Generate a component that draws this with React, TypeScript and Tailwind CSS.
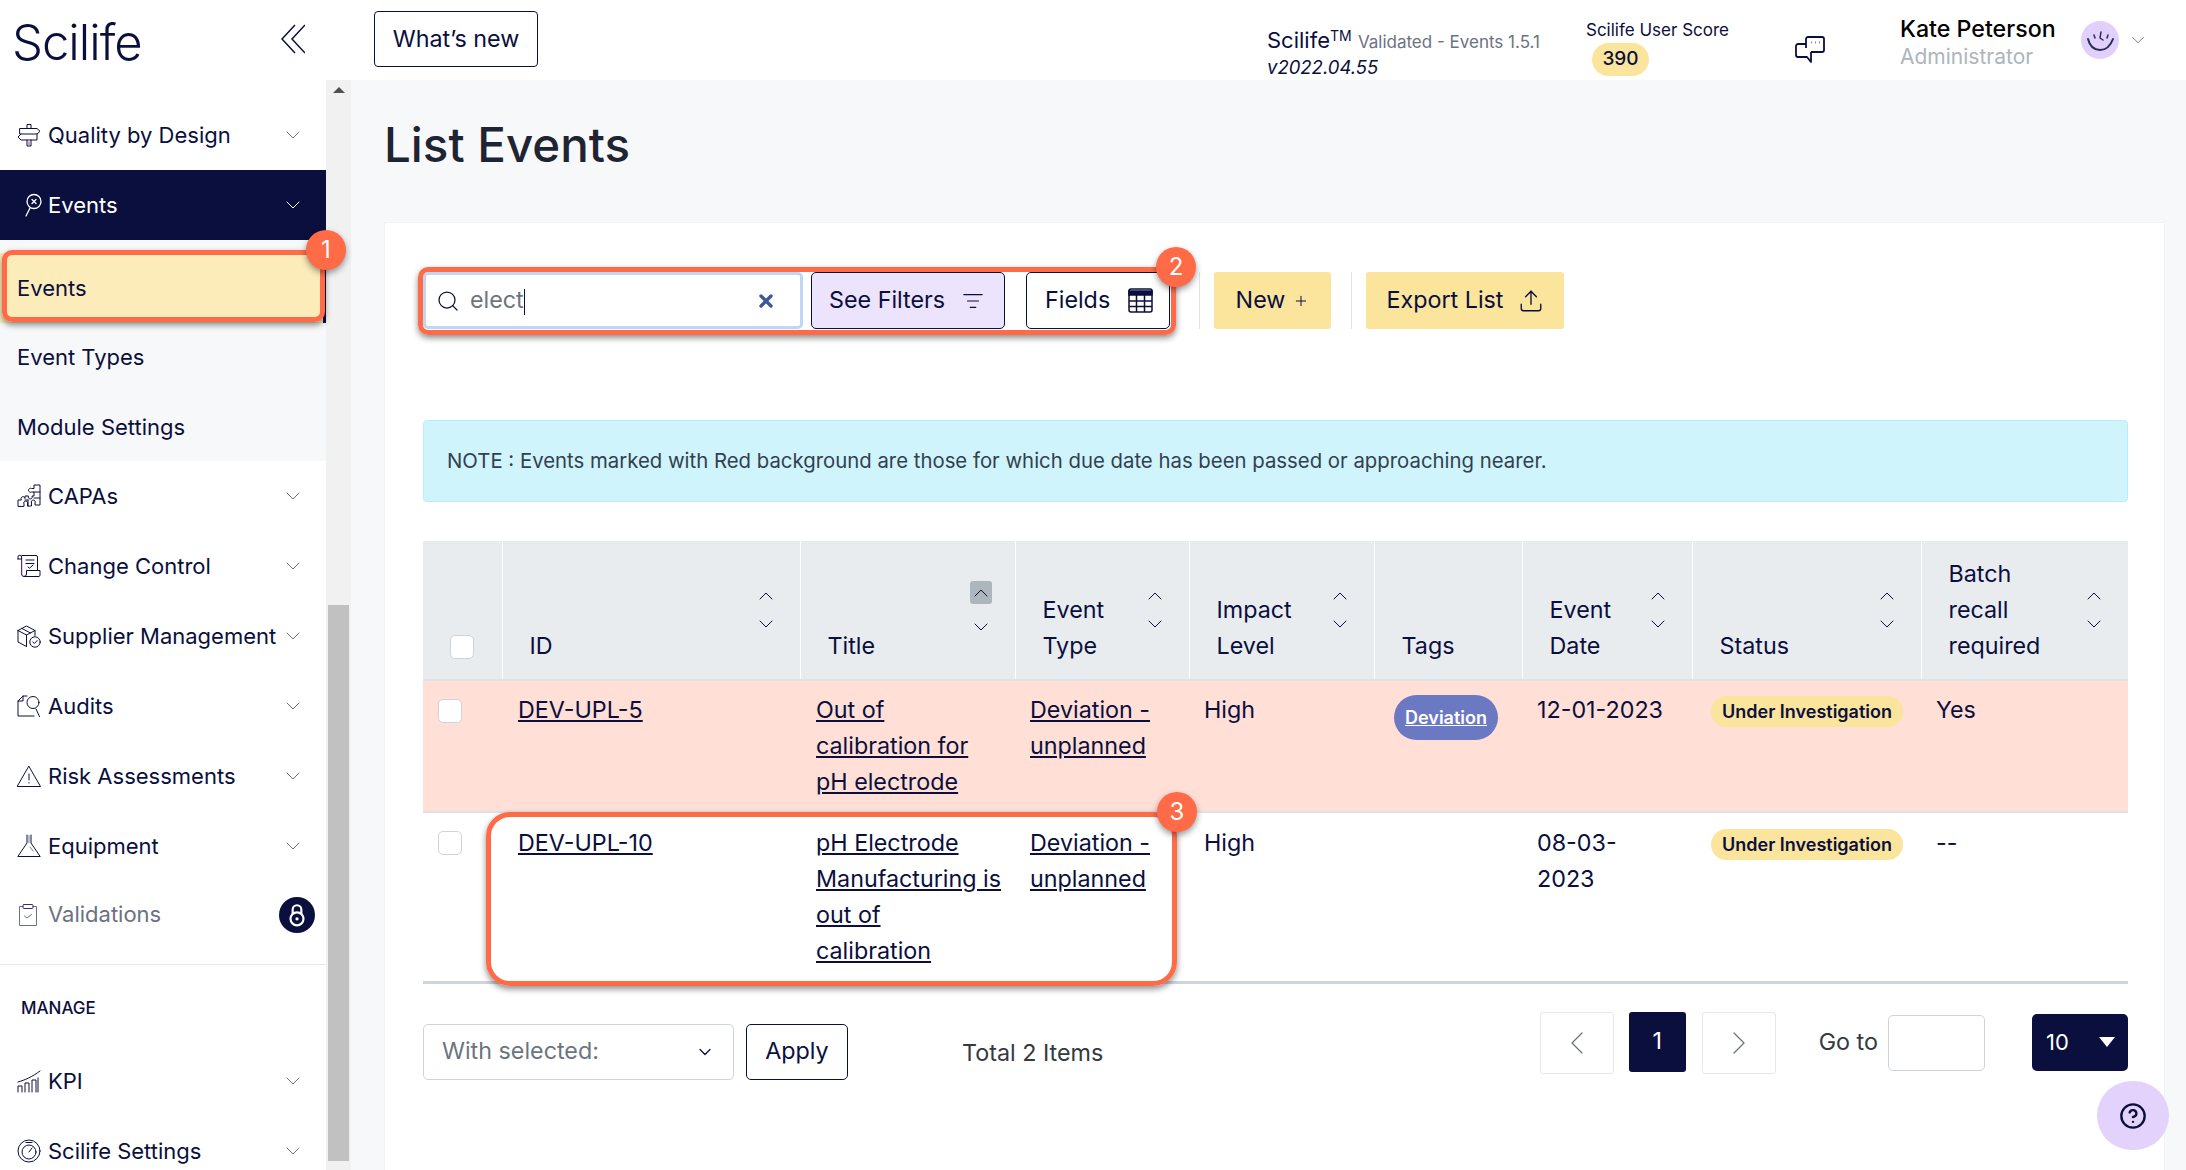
import type { ReactNode } from 'react';
import { Search, X, ListFilter, ChevronUp, ChevronDown, ChevronLeft, ChevronRight, Plus, Upload, CircleHelp } from 'lucide-react';

const Svg = ({ children, className = 'w-[24px] h-[24px] mr-[7px] shrink-0' }: { children: ReactNode; className?: string }) => (
  <svg viewBox="0 0 24 24" fill="none" stroke="currentColor" strokeWidth={1} strokeLinejoin="round" strokeLinecap="round" className={className}>
    {children}
  </svg>
);

const SignIcon = () => (
  <Svg>
    <path d="M10 5V1.5h4V5M10 17v6h4v-6" />
    <path d="M3 5.5h17l3 2.8-3 2.7H3z" />
    <path d="M4 11l-3 3 3 3h16v-6" />
    <path d="M12 19v3" stroke="#b4475c" />
  </Svg>
);
const PuzzleIcon = () => (
  <Svg>
    <path d="M1 22v-6h3.5a2 2 0 1 1 3.5-1.5V12h3.5a2 2 0 1 0 3.5 0h2V8h-2.5a2 2 0 1 1 0-3.5H17V1h6v20h-5v-2a2 2 0 1 0-3.5 0V22h-4v-2a2 2 0 1 0-3.5 0V22z" />
    <path d="M8 16h3M17 8h6M17 14h6M11 16v6" />
  </Svg>
);
const ScrollIcon = () => (
  <Svg>
    <path d="M5 1.5h14a1.5 1.5 0 0 1 1.500 1.500V16" />
    <path d="M1 5V3a1.800 1.800 0 0 1 3.600 0v17a2.500 2.500 0 0 0 2.500 2.500H22a1.500 1.500 0 0 0 1-1.500v-4.500H9.500V20a2.500 2.500 0 0 1-2.500 2.500" />
    <path d="M1 5h3.600" />
    <path d="M4.600 6v14" stroke="#6b2a9a" />
    <path d="M9 6h8M9 9.500h8M11 13l1.500 1.200L16 11" />
  </Svg>
);
const BoxIcon = () => (
  <Svg>
    <path d="M1 6.500L9.500 2 18 6.500v5M1 6.500V18l8.500 4.500M1 6.500l8.500 4.500V22.500M9.500 11L18 6.500M5 4.500l8.500 4.500" />
    <circle cx="18" cy="18" r="5.200" />
    <path d="M15.800 18l1.600 1.500 2.800-3" />
  </Svg>
);
const AuditIcon = () => (
  <Svg>
    <path d="M10 2H6L1 7v15h16" />
    <path d="M6 2v5H1" />
    <circle cx="16" cy="8.500" r="6" />
    <path d="M19 15l3.500 7.500" />
  </Svg>
);
const RiskIcon = () => (
  <Svg>
    <path d="M12 2.500L23.500 22.500H.5z" />
    <path d="M12 10v6M12 18.500v.5" />
  </Svg>
);
const FlaskIcon = () => (
  <Svg>
    <path d="M10 1v8L.8 22.500h22.400L14 9V1" />
    <path d="M12 1.500v7M13 13l3 4" stroke="#7b8088" />
  </Svg>
);
const ClipIcon = () => (
  <svg viewBox="0 0 20 24" fill="none" stroke="currentColor" strokeWidth={1} strokeLinecap="round" className="w-[20px] h-[24px] mr-[10px] shrink-0">
    <path d="M5 3.500H1.500v19h17v-19H15" />
    <rect x="5" y="1.500" width="10" height="4" rx="1" stroke="#3b2a7a" />
    <path d="M6.500 13l2.500 2 4.500-3.500" />
  </svg>
);
const KpiIcon = () => (
  <Svg>
    <path d="M1 23v-6h4v6M8 23v-9h4v9M15 23V11h4v12M21 23V9" />
    <path d="M1 13C8 11 15 8 23 2" />
  </Svg>
);
const DialIcon = () => (
  <Svg>
    <circle cx="12" cy="12" r="11" />
    <circle cx="12" cy="13" r="7" />
    <path d="M12 13l3-4M9 3.500h6" />
  </Svg>
);

const menuTop = [
  { label: 'CAPAs', icon: <PuzzleIcon /> },
  { label: 'Change Control', icon: <ScrollIcon /> },
  { label: 'Supplier Management', icon: <BoxIcon /> },
  { label: 'Audits', icon: <AuditIcon /> },
  { label: 'Risk Assessments', icon: <RiskIcon /> },
  { label: 'Equipment', icon: <FlaskIcon /> },
];

const Chevron = () => <ChevronDown className="w-[24px] h-[24px] text-[#6b7280] shrink-0" strokeWidth={1} />;

const Item = ({ label, icon }: { label: string; icon: ReactNode }) => (
  <div className="h-[70px] flex items-center pl-[17px] pr-[21px]">
    {icon}
    <span className="flex-1 whitespace-nowrap text-[22px]">{label}</span>
    <Chevron />
  </div>
);

const Sidebar = () => (
  <aside className="w-[351px] shrink-0 flex flex-col bg-white h-[1170px] overflow-hidden">
    <div className="h-[80px] shrink-0 flex items-center justify-between pl-[12px] pr-[46px]">
      <span className="text-[49px] font-light leading-none text-[#0a0f3d] tracking-[-1px] mt-[4px]">Scilife</span>
      <svg viewBox="0 0 24 30" fill="none" stroke="currentColor" strokeWidth={1.5} className="w-[24px] h-[30px] -mt-[3px] text-[#0a0f3d]">
        <path d="M14 1L1 15l13 14M24 1L11 15l13 14" />
      </svg>
    </div>
    <div className="flex flex-1">
      <nav className="w-[326px] pt-[20px]">
        <Item label="Quality by Design" icon={<SignIcon />} />
        <div className="h-[70px] bg-[#0a0f3d] text-white flex items-center pl-[21px] pr-[21px]">
          <svg viewBox="0 0 24 24" fill="none" stroke="currentColor" strokeWidth={1.3} strokeLinecap="round" className="w-[24px] h-[24px] mr-[3px] shrink-0">
            <circle cx="13" cy="8.500" r="7" />
            <path d="M9 15L5 23M11 6.500l4 4M15 6.500l-4 4" />
          </svg>
          <span className="flex-1 text-[22px]">Events</span>
          <ChevronDown className="w-[24px] h-[24px]" strokeWidth={1} />
        </div>
        <div className="bg-[#f6f8fa] h-[221px] pt-[13px]">
          <div className="h-[70px] flex items-center pl-[17px] bg-[#fbecba] border-r-[3px] border-[#0a0f3d] text-[22px]">Events</div>
          <div className="h-[69px] flex items-center pl-[17px] text-[22px]">Event Types</div>
          <div className="h-[70px] flex items-center pl-[17px] text-[22px]">Module Settings</div>
        </div>
        {menuTop.map((m) => <Item key={m.label} {...m} />)}
        <div className="h-[70px] flex items-center pl-[18px] pr-[11px] pb-[3px] text-[#6b7280]">
          <ClipIcon />
          <span className="flex-1 text-[22px]">Validations</span>
          <span className="w-[36px] h-[36px] rounded-full bg-[#0a0f3d] flex items-center justify-center">
            <svg viewBox="0 0 24 24" fill="none" stroke="white" strokeWidth={2} className="w-[26px] h-[26px]">
              <path d="M8 11V7a4 4 0 0 1 8 0v4" />
              <circle cx="12" cy="15.500" r="6" />
              <circle cx="12" cy="15.500" r="1.500" fill="white" stroke="none" />
            </svg>
          </span>
        </div>
        <div className="mt-[13px] border-t border-[#e5e7eb] pt-[33px] pl-[21px] text-[17px] font-medium leading-[20px] h-[82px]">MANAGE</div>
        <Item label="KPI" icon={<KpiIcon />} />
        <Item label="Scilife Settings" icon={<DialIcon />} />
      </nav>
      <div className="w-[25px] bg-[#f1f1f1] flex flex-col items-center pt-[7px]">
        <div className="w-0 h-0 border-x-[6px] border-x-transparent border-b-[6px] border-b-[#505050]" />
        <div className="w-[21px] h-[556px] mt-[512px] bg-[#c1c1c1]" />
      </div>
    </div>
  </aside>
);

const TopBar = () => (
  <header className="h-[80px] shrink-0 bg-white flex items-center relative pl-[23px]">
    <button className="h-[56px] w-[164px] -mt-[2px] border border-[#0a0f3d] rounded-[4px] text-[23.300px]">What’s new</button>
    <div className="ml-[729px] w-[319px] mt-[26px]">
      <div className="leading-[26px] text-[22px] whitespace-nowrap">Scilife<sup className="text-[14px]">TM</sup> <span className="text-[17px] text-[#6b7280]">Validated - Events 1.5.1</span></div>
      <div className="italic text-[18.500px] leading-[24px]">v2022.04.55</div>
    </div>
    <div className="w-[209px] self-start pt-[19px]">
      <div className="text-[17px] leading-[22px] whitespace-nowrap">Scilife User Score</div>
      <div className="ml-[6px] mt-[2px] w-[57px] h-[33px] rounded-full bg-[#fbe49c] flex items-center justify-center text-[19px] font-medium">390</div>
    </div>
    <svg viewBox="0 0 30 28" fill="none" stroke="currentColor" strokeWidth={1.800} strokeLinejoin="round" className="w-[30px] h-[28px] mt-[20px] mr-[75px] text-[#0a0f3d]">
      <path d="M11 12V3a2 2 0 0 1 2-2h14a2 2 0 0 1 2 2v11a2 2 0 0 1-2 2H16" />
      <path d="M11 8H3a2 2 0 0 0-2 2v9a2 2 0 0 0 2 2h9l4 5V16" />
      <path d="M16 6.500h.5M20 6.500h.5M24 6.500h.5" strokeWidth={2.200} />
    </svg>
    <div className="w-[181px] mt-[5px]">
      <div className="text-[23.200px] font-medium leading-[27px] whitespace-nowrap text-black">Kate Peterson</div>
      <div className="text-[21px] leading-[27px] text-[#adb5bd]">Administrator</div>
    </div>
    <span className="w-[38px] h-[38px] rounded-full bg-[#e0d0fb] flex items-center justify-center">
      <svg viewBox="0 0 38 38" fill="none" stroke="#2a2c55" strokeWidth={2} strokeLinecap="round" className="w-[38px] h-[38px]">
        <path d="M7 18c2 8 7 11 12 11s10-3 13-11" />
        <path d="M13 14l1 3M20 11l-1 6 3 2M27 14l-1 3" strokeWidth={1.500} />
      </svg>
    </span>
    <ChevronDown className="w-[22px] h-[22px] ml-[8px] text-[#6b7280]" strokeWidth={1} />
  </header>
);

const Sort = ({ active }: { active?: boolean }) => (
  <div className="flex flex-col items-center shrink-0 w-[24px]">
    {active ? (
      <span className="w-[22px] h-[23px] rounded-[3px] bg-[#adb5bd] flex items-center justify-center"><ChevronUp className="w-[24px] h-[24px] shrink-0" strokeWidth={1} /></span>
    ) : <ChevronUp className="w-[24px] h-[24px]" strokeWidth={1} />}
    <ChevronDown className={active ? 'w-[24px] h-[24px] mt-[11px]' : 'w-[24px] h-[24px] mt-[4px]'} strokeWidth={1} />
  </div>
);

const Head = ({ label, sort, active }: { label?: string[]; sort?: boolean; active?: boolean }) => (
  <th className="border-r border-white last:border-r-0 font-normal text-left p-0 pl-[27px]">
    <div className="flex items-center justify-between h-[138px] pr-[22px]">
      <div className="self-end pb-[15px] leading-[36px]">
        {label?.map((l) => <div key={l}>{l}</div>)}
      </div>
      {sort && <Sort active={active} />}
    </div>
  </th>
);

const Check = ({ className = '' }: { className?: string }) => (
  <span className={`block w-[24px] h-[24px] rounded-[5px] border border-[#ced4da] bg-white ${className}`} />
);

const Under = () => (
  <span className="inline-block h-[31px] w-[192px] mt-[2px] -ml-[1px] rounded-full bg-[#fbe49c] text-center text-[18px] font-semibold leading-[31px] whitespace-nowrap">Under Investigation</span>
);

const EventsTable = () => (
  <table className="w-[1705px] table-fixed border-collapse text-[23.300px] leading-[36px] mt-[39px]">
    <colgroup>
      <col className="w-[79px]" /><col className="w-[298px]" /><col className="w-[215px]" /><col className="w-[174px]" /><col className="w-[185px]" /><col className="w-[148px]" /><col className="w-[170px]" /><col className="w-[229px]" /><col className="w-[207px]" />
    </colgroup>
    <thead className="bg-[#e9ecef] border-b-2 border-[#dee2e6]">
      <tr>
        <th className="border-r border-white p-0 align-bottom"><Check className="ml-[27px] mb-[20px]" /></th>
        <Head label={['ID']} sort />
        <Head label={['Title']} sort active />
        <Head label={['Event', 'Type']} sort />
        <Head label={['Impact', 'Level']} sort />
        <Head label={['Tags']} />
        <Head label={['Event', 'Date']} sort />
        <Head label={['Status']} sort />
        <Head label={['Batch', 'recall', 'required']} sort />
      </tr>
    </thead>
    <tbody className="[&_td]:align-top [&_td]:pt-[11px] [&_td]:pl-[15px] [&_td]:pr-[4px] [&>tr:last-child_td]:pt-[12px]">
      <tr className="bg-[#ffdfd6] border-b-2 border-[#dee2e6] h-[132px]">
        <td><Check className="mt-[7px]" /></td>
        <td className="!pl-[16px]"><a className="underline">DEV-UPL-5</a></td>
        <td className="!pl-[16px]"><a className="underline">Out of<br />calibration for<br />pH electrode</a></td>
        <td><a className="underline">Deviation -<br />unplanned</a></td>
        <td>High</td>
        <td className="!pl-[20px]">
          <span className="inline-flex items-center justify-center w-[104px] h-[45px] mt-[3px] rounded-full bg-[#6b78c2] text-white text-[18px] font-semibold underline">Deviation</span>
        </td>
        <td>12-01-2023</td>
        <td className="!pl-[20px]"><Under /></td>
        <td>Yes</td>
      </tr>
      <tr className="border-b-[3px] border-[#ced4da] h-[170px]">
        <td><Check className="mt-[6px]" /></td>
        <td className="!pl-[16px]"><a className="underline">DEV-UPL-10</a></td>
        <td className="!pl-[16px]"><a className="underline">pH Electrode<br />Manufacturing is<br />out of<br />calibration</a></td>
        <td><a className="underline">Deviation -<br />unplanned</a></td>
        <td>High</td>
        <td />
        <td>08-03-<br />2023</td>
        <td className="!pl-[20px]"><Under /></td>
        <td>--</td>
      </tr>
    </tbody>
  </table>
);

const Footer = () => (
  <div className="flex items-start mt-[28px] relative">
    <div className="w-[311px] h-[56px] mt-[12px] border border-[#ced4da] rounded-[5px] flex items-center justify-between pl-[18px] pr-[18px] text-[#6c757d]">
      With selected:
      <ChevronDown className="w-[20px] h-[20px] text-[#0a0f3d]" strokeWidth={1.5} />
    </div>
    <button className="w-[102px] h-[56px] mt-[12px] ml-[12px] border border-[#0a0f3d] rounded-[5px]">Apply</button>
    <span className="ml-[114px] mt-[23px] leading-[36px] whitespace-nowrap text-[#343a40]">Total 2 Items</span>
    <div className="ml-auto flex items-start">
      <span className="w-[74px] h-[62px] border border-[#e5e7eb] rounded-[3px] flex items-center justify-center"><ChevronLeft className="w-[40px] h-[40px] text-[#6b7280]" strokeWidth={0.75} /></span>
      <span className="w-[57px] h-[60px] ml-[15px] bg-[#0a0f3d] rounded-[3px] text-white flex items-center justify-center">1</span>
      <span className="w-[74px] h-[62px] ml-[16px] border border-[#e5e7eb] rounded-[3px] flex items-center justify-center"><ChevronRight className="w-[40px] h-[40px] text-[#6b7280]" strokeWidth={0.75} /></span>
      <span className="ml-[43px] mt-[13px] mr-[10px] whitespace-nowrap text-[#343a40]">Go to</span>
      <span className="w-[97px] h-[56px] mt-[3px] border border-[#ced4da] rounded-[5px]" />
      <div className="w-[96px] h-[57px] mt-[2px] ml-[47px] rounded-[5px] bg-[#0a0f3d] text-white flex items-center justify-between pl-[14px] pr-[13px] text-[22px]">
        10
        <span className="w-0 h-0 border-x-[8px] border-x-transparent border-t-[10px] border-t-white" />
      </div>
    </div>
  </div>
);

const Notes = ({ className, n, badge }: { className: string; n: number; badge: string }) => (
  <>
    <div className={`absolute border-[5px] border-[#ff6b47] rounded-[10px] shadow-[0_3px_6px_rgba(0,0,0,0.45)] pointer-events-none ${className}`} />
    <div className={`absolute w-[40px] h-[40px] rounded-full bg-[#ff6b47] text-white text-[24px] flex items-center justify-center shadow-[0_3px_6px_rgba(0,0,0,0.4)] ${badge}`}>{n}</div>
  </>
);

export default function App() {
  return (
    <div className="relative w-[2186px] h-[1170px] overflow-hidden flex bg-[#f7f8fa] text-[#0a0f3d]" style={{ fontFamily: '"Inter", "Liberation Sans", sans-serif' }}>
      <Sidebar />
      <div className="flex-1 flex flex-col min-w-0">
        <TopBar />
        <main className="pl-[33px] pr-[21px]">
          <h1 className="text-[47.500px] font-medium leading-[54px] mt-[38px] text-[#1f2433]">List Events</h1>
          <section className="mt-[50px] bg-white border border-[#f1f3f5] pl-[38px] pr-[36px] pt-[49px] h-[950px] text-[23.300px]">
            <div className="flex items-center h-[57px]">
              <div className="w-[380px] h-[57px] border-[3px] border-[#bfd6f5] rounded-[5px] flex items-center pl-[10px] pr-[24px]">
                <Search className="w-[24px] h-[24px] mr-[10px] text-[#0a0f3d]" strokeWidth={1.25} />
                <span className="flex-1 text-[#6c757d]">elect<span className="inline-block w-px h-[26px] bg-[#0a0f3d] align-middle" /></span>
                <X className="w-[20px] h-[20px] text-[#3a5a96]" strokeWidth={4} />
              </div>
              <button className="w-[194px] h-[57px] ml-[8px] bg-[#ece3fc] border border-[#0a0f3d] rounded-[5px] flex items-center justify-between pl-[17px] pr-[20px]">
                See Filters <ListFilter className="w-[22px] h-[22px]" strokeWidth={1.25} />
              </button>
              <button className="w-[144px] h-[57px] ml-[21px] border border-[#0a0f3d] rounded-[5px] flex items-center justify-between pl-[18px] pr-[16px]">
                Fields
                <svg viewBox="0 0 25 25" fill="none" stroke="currentColor" strokeWidth={1.500} className="w-[25px] h-[25px]">
                  <rect x="1" y="1" width="23" height="23" rx="2" />
                  <path d="M1 3h23v4H1z" fill="currentColor" />
                  <path d="M1 13h23M1 18.500h23M8.500 7v17M16.500 7v17" />
                </svg>
              </button>
              <span className="w-px h-[57px] bg-[#dee2e6] ml-[29px]" />
              <button className="w-[117px] h-[57px] ml-[14px] bg-[#fbe49c] rounded-[3px] flex items-center justify-center gap-[8px]">
                New <Plus className="w-[16px] h-[16px]" strokeWidth={1.5} />
              </button>
              <span className="w-px h-[57px] bg-[#dee2e6] ml-[20px]" />
              <button className="w-[198px] h-[57px] ml-[14px] bg-[#fbe49c] rounded-[3px] flex items-center justify-center gap-[14px]">
                Export List <Upload className="w-[26px] h-[26px]" strokeWidth={1.25} />
              </button>
            </div>
            <div className="mt-[91px] h-[82px] bg-[#cff4fc] border border-[#b6effb] rounded-[4px] flex items-center pl-[23px] text-[#32404f] text-[20.350px] whitespace-nowrap">
              NOTE : Events marked with Red background are those for which due date has been passed or approaching nearer.
            </div>
            <EventsTable />
            <Footer />
          </section>
        </main>
      </div>
      <Notes n={1} className="left-[2px] top-[250px] w-[323px] h-[72px]" badge="left-[306px] top-[230px]" />
      <Notes n={2} className="left-[418px] top-[267px] w-[758px] h-[68px]" badge="left-[1156px] top-[247px]" />
      <Notes n={3} className="left-[486px] top-[812px] w-[691px] h-[174px] !rounded-[24px]" badge="left-[1157px] top-[792px]" />
      <button className="absolute left-[2097px] top-[1081px] w-[72px] h-[69px] rounded-full bg-[#e3d3fc] flex items-center justify-center">
        <CircleHelp className="w-[28px] h-[28px] text-[#0a0f3d]" strokeWidth={2} />
      </button>
    </div>
  );
}
